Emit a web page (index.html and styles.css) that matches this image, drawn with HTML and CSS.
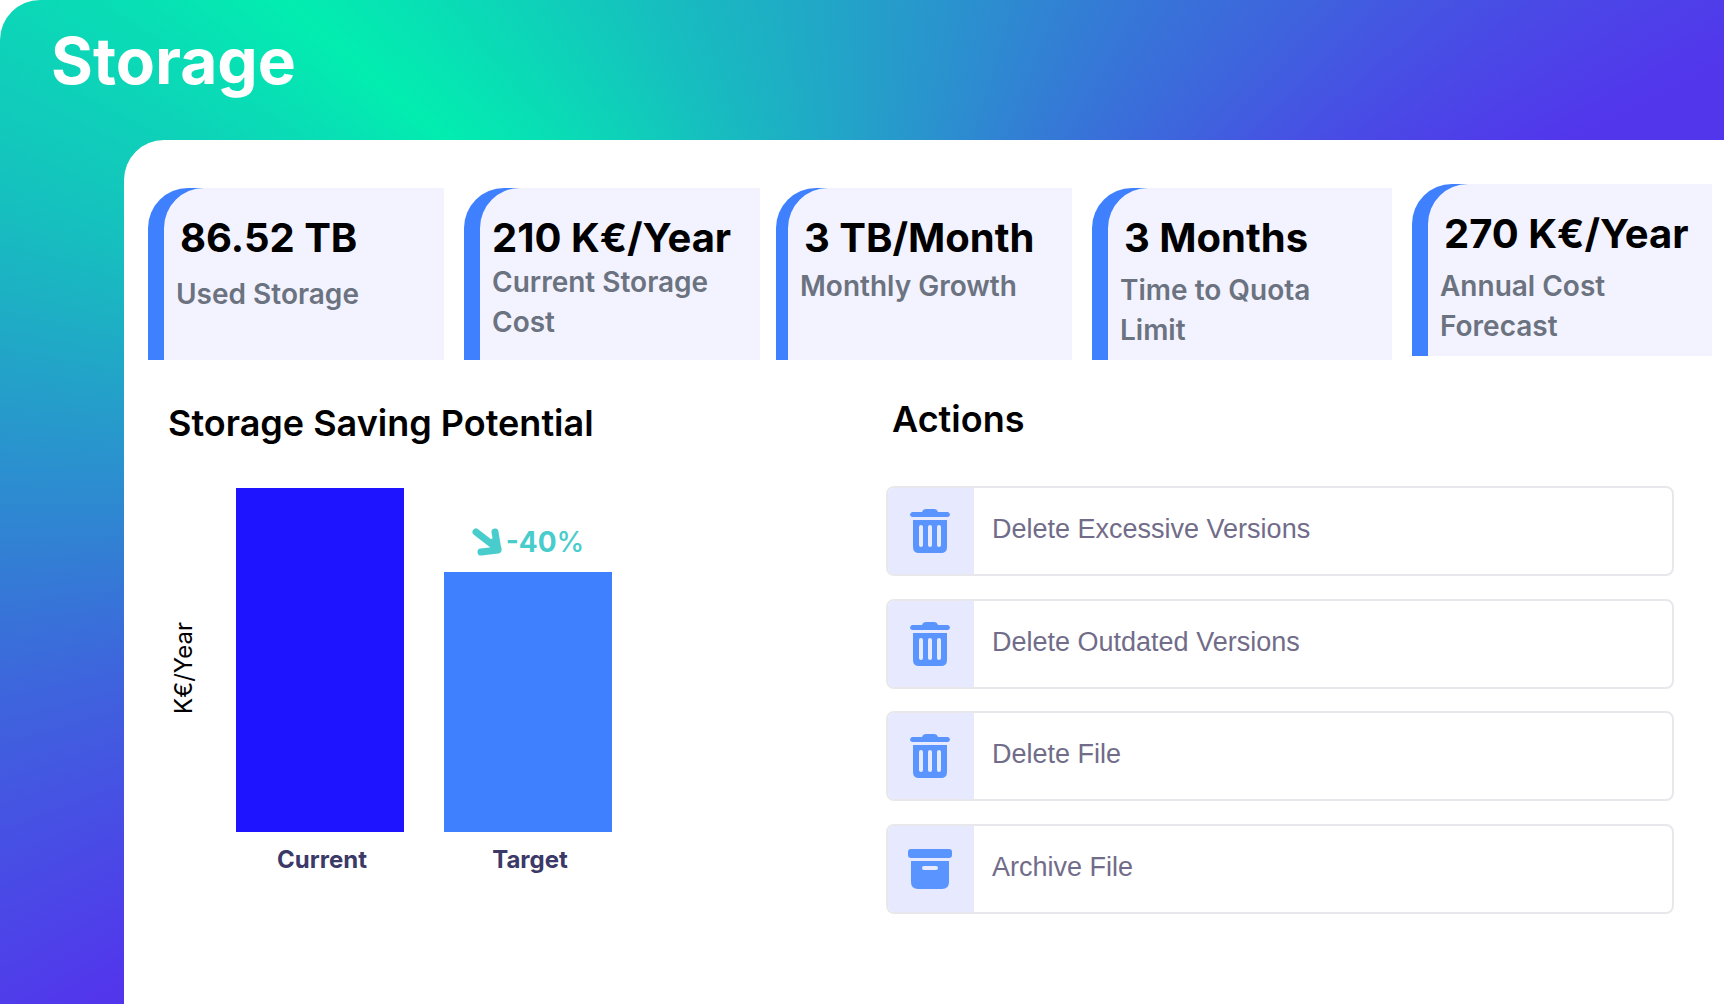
FILE: index.html
```
<!DOCTYPE html>
<html lang="en">
<head>
<meta charset="utf-8">
<meta name="viewport" content="width=device-width, initial-scale=1">
<title>Storage</title>
<link rel="stylesheet" href="styles.css">
</head>
<body>
<svg class="sprite" width="0" height="0" aria-hidden="true">
  <symbol id="trash" viewBox="0 0 40 44">
    <path d="M2 3h10q1-3 4-3h8q3 0 4 3h10q2 1 2 2.500t-2 2.500H2Q0 7 0 5.500T2 3z"/>
    <path fill-rule="evenodd" d="M3 11h34v27q0 6-6 6H9q-6 0-6-6zM9 18v18q0 2 2 2t2-2V18q0-2-2-2t-2 2zm9 0v18q0 2 2 2t2-2V18q0-2-2-2t-2 2zm9 0v18q0 2 2 2t2-2V18q0-2-2-2t-2 2z"/>
  </symbol>
  <symbol id="archive" viewBox="0 0 44 40">
    <rect width="44" height="9" rx="3"/>
    <path fill-rule="evenodd" d="M3 12h38v21q0 7-7 7H10q-7 0-7-7zM16 17q-2 0-2 2t2 2h12q2 0 2-2t-2-2z"/>
  </symbol>
</svg>
<div class="app">
  <header class="header"><h1 class="title">Storage</h1></header>
  <main class="panel">
    <section class="stats" aria-label="Key figures">
      <article class="stat stat-narrow"><div class="face"><strong class="value value-inset">86.52 TB</strong><span class="label label-low">Used Storage</span></div></article>
      <article class="stat"><div class="face"><strong class="value">210 K€/Year</strong><span class="label label-high">Current Storage Cost</span></div></article>
      <article class="stat stat-narrow stat-slim"><div class="face"><strong class="value value-inset">3 TB/Month</strong><span class="label">Monthly Growth</span></div></article>
      <article class="stat stat-narrow"><div class="face"><strong class="value value-inset">3 Months</strong><span class="label label-mid">Time to Quota Limit</span></div></article>
      <article class="stat stat-raised"><div class="face"><strong class="value value-inset">270 K€/Year</strong><span class="label label-mid">Annual Cost Forecast</span></div></article>
    </section>
    <div class="columns">
      <section class="savings">
        <h2 class="heading">Storage Saving Potential</h2>
        <div class="chart">
          <span class="axis">K€/Year</span>
          <div class="group">
            <div class="bar bar-current"></div>
            <span class="name">Current</span>
          </div>
          <div class="group">
            <div class="change">
              <svg class="arrow" viewBox="0 0 30 28" aria-hidden="true"><path d="M4 4l22 17M23 4l3 18-17 2M21 14l1 6"/></svg>
              <span>-40<span class="unit">%</span></span>
            </div>
            <div class="bar bar-target"></div>
            <span class="name">Target</span>
          </div>
        </div>
      </section>
      <section class="actions">
        <h2 class="heading">Actions</h2>
        <div class="list">
          <button class="action" type="button"><span class="badge"><svg class="trash"><use href="#trash"/></svg></span><span class="text">Delete Excessive Versions</span></button>
          <button class="action" type="button"><span class="badge"><svg class="trash"><use href="#trash"/></svg></span><span class="text">Delete Outdated Versions</span></button>
          <button class="action" type="button"><span class="badge"><svg class="trash"><use href="#trash"/></svg></span><span class="text">Delete File</span></button>
          <button class="action" type="button"><span class="badge"><svg class="archive"><use href="#archive"/></svg></span><span class="text">Archive File</span></button>
        </div>
      </section>
    </div>
  </main>
</div>
</body>
</html>
```
FILE: styles.css
```
* { box-sizing: border-box; }

body {
  margin: 0;
  background: #fff;
  color: #000;
  font-family: Inter, "Liberation Sans", sans-serif;
}

.sprite { position: absolute; }

.app {
  display: flex;
  flex-direction: column;
  min-height: 100vh;
  padding-left: 124px;
  border-top-left-radius: 40px;
  background: conic-gradient(from -180deg at 50% 50%,
    #5236ec 0deg, #5236ec 57deg,
    #3e64dd 77deg, #2a92ce 93deg, #16bfbf 109deg,
    #02edb0 131deg,
    #16bfbf 157deg, #2a92ce 191deg, #3e64dd 221deg,
    #5236ec 243deg, #5236ec 360deg);
}

.header {
  height: 140px;
  margin-left: -124px;
  padding: 21px 51px;
}

.title {
  margin: 0;
  color: #fff;
  font-size: 64px;
  font-weight: 700;
  line-height: 80px;
}

.panel {
  flex: 1;
  padding: 48px 12px 48px 24px;
  border-top-left-radius: 40px;
  background: #fff;
}

.stats {
  display: grid;
  grid-template-columns: 300fr 296fr 300fr 304fr 300fr;
  gap: 16px;
}

.stat {
  height: 172px;
  padding-left: 16px;
  border-top-left-radius: 40px;
  background: #3f80ff;
  overflow: hidden;
}

.stat-narrow { margin-right: 4px; }
.stat-slim { padding-left: 12px; }

.stat-raised {
  margin-top: -4px;
  margin-bottom: 4px;
}

.face {
  display: flex;
  flex-direction: column;
  height: 100%;
  padding: 26px 12px 0;
  border-top-left-radius: 40px;
  background: #f3f3ff;
}

.value {
  font-size: 40px;
  font-weight: 700;
  line-height: 48px;
  white-space: nowrap;
}

.value-inset { padding-left: 4px; }

.label {
  margin-top: 4px;
  color: #6b7280;
  font-size: 28px;
  font-weight: 600;
  line-height: 40px;
}

.label-high { margin-top: 0; }
.label-mid { margin-top: 8px; }
.label-low { margin-top: 12px; }

.columns {
  display: grid;
  grid-template-columns: 718fr 846fr;
}

.heading {
  margin: 0;
  font-size: 36px;
  font-weight: 600;
  line-height: 44px;
}

.savings { padding: 41px 0 0 20px; }

.chart {
  display: flex;
  gap: 40px;
  align-items: flex-end;
  margin-top: 43px;
}

.axis {
  align-self: center;
  width: 28px;
  padding-top: 28px;
  font-size: 24px;
  font-weight: 400;
  line-height: 32px;
  writing-mode: vertical-rl;
  transform: rotate(180deg);
}

.group {
  display: flex;
  flex-direction: column;
  align-items: center;
  width: 168px;
}

.bar { width: 100%; }
.bar-current { height: 344px; background: #1f14ff; }
.bar-target { height: 260px; background: #3f80ff; }

.name {
  margin-top: 12px;
  padding-left: 4px;
  color: #3b3968;
  font-size: 24px;
  font-weight: 700;
  line-height: 32px;
}

.change {
  display: flex;
  gap: 4px;
  align-items: center;
  margin-bottom: 12px;
  color: #49cccc;
  font-size: 28px;
  font-weight: 700;
  line-height: 36px;
}

.unit { font-weight: 500; }

.arrow {
  width: 30px;
  height: 28px;
  fill: none;
  stroke: currentColor;
  stroke-width: 7;
  stroke-linecap: round;
  stroke-linejoin: round;
}

.actions { padding: 37px 38px 0 20px; }
.actions .heading { padding-left: 6px; }

.list {
  display: flex;
  flex-direction: column;
  justify-content: space-between;
  height: 428px;
  margin-top: 45px;
}

.action {
  display: flex;
  width: 100%;
  height: 90px;
  padding: 0;
  overflow: hidden;
  border: 2px solid #e8e8ec;
  border-radius: 8px;
  background: #fff;
  color: #716c89;
  font-family: "Liberation Sans", Arial, sans-serif;
  font-size: 27px;
  line-height: 32px;
  text-align: left;
}

.badge {
  display: flex;
  align-items: center;
  justify-content: center;
  width: 86px;
  height: 100%;
  padding-right: 2px;
  background: #e7e9ff;
  fill: #5a94ff;
}

.trash { width: 40px; height: 44px; }
.archive { width: 44px; height: 40px; }

.text { padding: 25px 18px; }
```
